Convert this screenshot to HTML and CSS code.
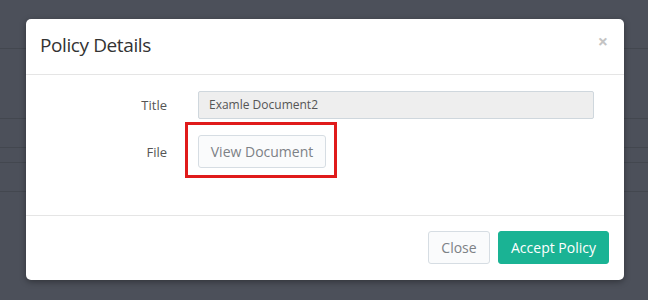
FILE: index.html
```html
<!DOCTYPE html>
<html>
<head>
<meta charset="utf-8">
<link rel="stylesheet" href="styles.css">
</head>
<body>
<div class="backdrop">
  <div class="bg-top"></div>
  <div class="bg-row r1"></div>
  <div class="bg-row r2"></div>
  <div class="bg-row r3"></div>
  <div class="bg-row r4"></div>
</div>
<div class="modal">
  <div class="modal-header">
    <h4 class="modal-title">Policy Details</h4>
    <span class="close">&times;</span>
  </div>
  <div class="modal-body">
    <div class="form-row">
      <label class="label">Title</label>
      <div class="field"><div class="input">Examle Document2</div></div>
    </div>
    <div class="form-row">
      <label class="label">File</label>
      <div class="field">
        <span class="highlight">
          <button class="btn btn-default">View Document</button>
        </span>
      </div>
    </div>
  </div>
  <div class="modal-footer">
    <button class="btn btn-white">Close</button>
    <button class="btn btn-primary">Accept Policy</button>
  </div>
</div>
</body>
</html>
```
FILE: styles.css
```css
html, body {
  margin: 0;
  padding: 0;
  height: 100%;
}
body {
  background: #4c505a;
  font-family: "Open Sans", "DejaVu Sans", sans-serif;
  overflow: hidden;
}
.backdrop {
  display: flex;
  flex-direction: column;
}
.bg-top {
  height: 48px;
  border-bottom: 1px solid #43474f;
}
.bg-row {
  border-bottom: 1px solid #43474f;
}
.r1 { height: 69px; }
.r2 { height: 28px; }
.r3 { height: 14px; }
.r4 { height: 28px; }

.modal {
  position: absolute;
  left: 26px;
  top: 19px;
  width: 598px;
  height: 261px;
  background: #fff;
  border-radius: 5px;
  box-shadow: 0 2px 6px rgba(0,0,0,0.35);
  display: flex;
  flex-direction: column;
}
.modal-header {
  height: 56px;
  border-bottom: 1px solid #e5e5e5;
  padding: 0 14px;
  display: flex;
  align-items: flex-start;
  justify-content: space-between;
  box-sizing: border-box;
}
.modal-title {
  margin: 0;
  margin-top: 13px;
  font-size: 19px;
  font-weight: 400;
  color: #333;
  letter-spacing: -0.4px;
}
.close {
  margin-top: 13px;
  margin-right: 2px;
  font-size: 18px;
  font-weight: 700;
  color: #c4c4c4;
  line-height: 1;
}
.modal-body {
  flex: 1;
  padding: 16px 30px 0 0;
  display: flex;
  flex-direction: column;
  gap: 16px;
}
.form-row {
  display: flex;
  align-items: center;
}
.label {
  width: 141px;
  text-align: right;
  font-size: 13px;
  color: #555;
  padding-right: 31px;
  box-sizing: content-box;
}
.field {
  flex: 1;
}
.input {
  height: 28px;
  box-sizing: border-box;
  background: #eeeeee;
  border: 1px solid #cfd7dd;
  border-radius: 2px;
  padding: 0 10px;
  font-size: 12px;
  line-height: 26px;
  color: #555;
}
.highlight {
  position: relative;
  display: inline-block;
  vertical-align: top;
}
.highlight::after {
  content: "";
  position: absolute;
  left: -13px;
  top: -13px;
  right: -11px;
  bottom: -10px;
  border: 3px solid #e01b1b;
}
.btn {
  font-family: inherit;
  height: 33px;
  border-radius: 3px;
  font-size: 14px;
  padding: 0;
  white-space: nowrap;
  cursor: pointer;
  box-sizing: border-box;
  display: block;
}
.btn-default, .btn-white {
  background: #fafbfc;
  border: 1px solid #d6dde3;
  color: #7d8186;
}
.btn-default {
  width: 128px;
}
.btn-white {
  width: 62px;
}
.btn-primary {
  background: #1ab394;
  border: 1px solid #1ab394;
  color: #fff;
  width: 111px;
}
.modal-footer {
  height: 65px;
  border-top: 1px solid #e5e5e5;
  box-sizing: border-box;
  padding: 15px 15px 0 0;
  display: flex;
  justify-content: flex-end;
  align-items: flex-start;
  gap: 8px;
}
```
